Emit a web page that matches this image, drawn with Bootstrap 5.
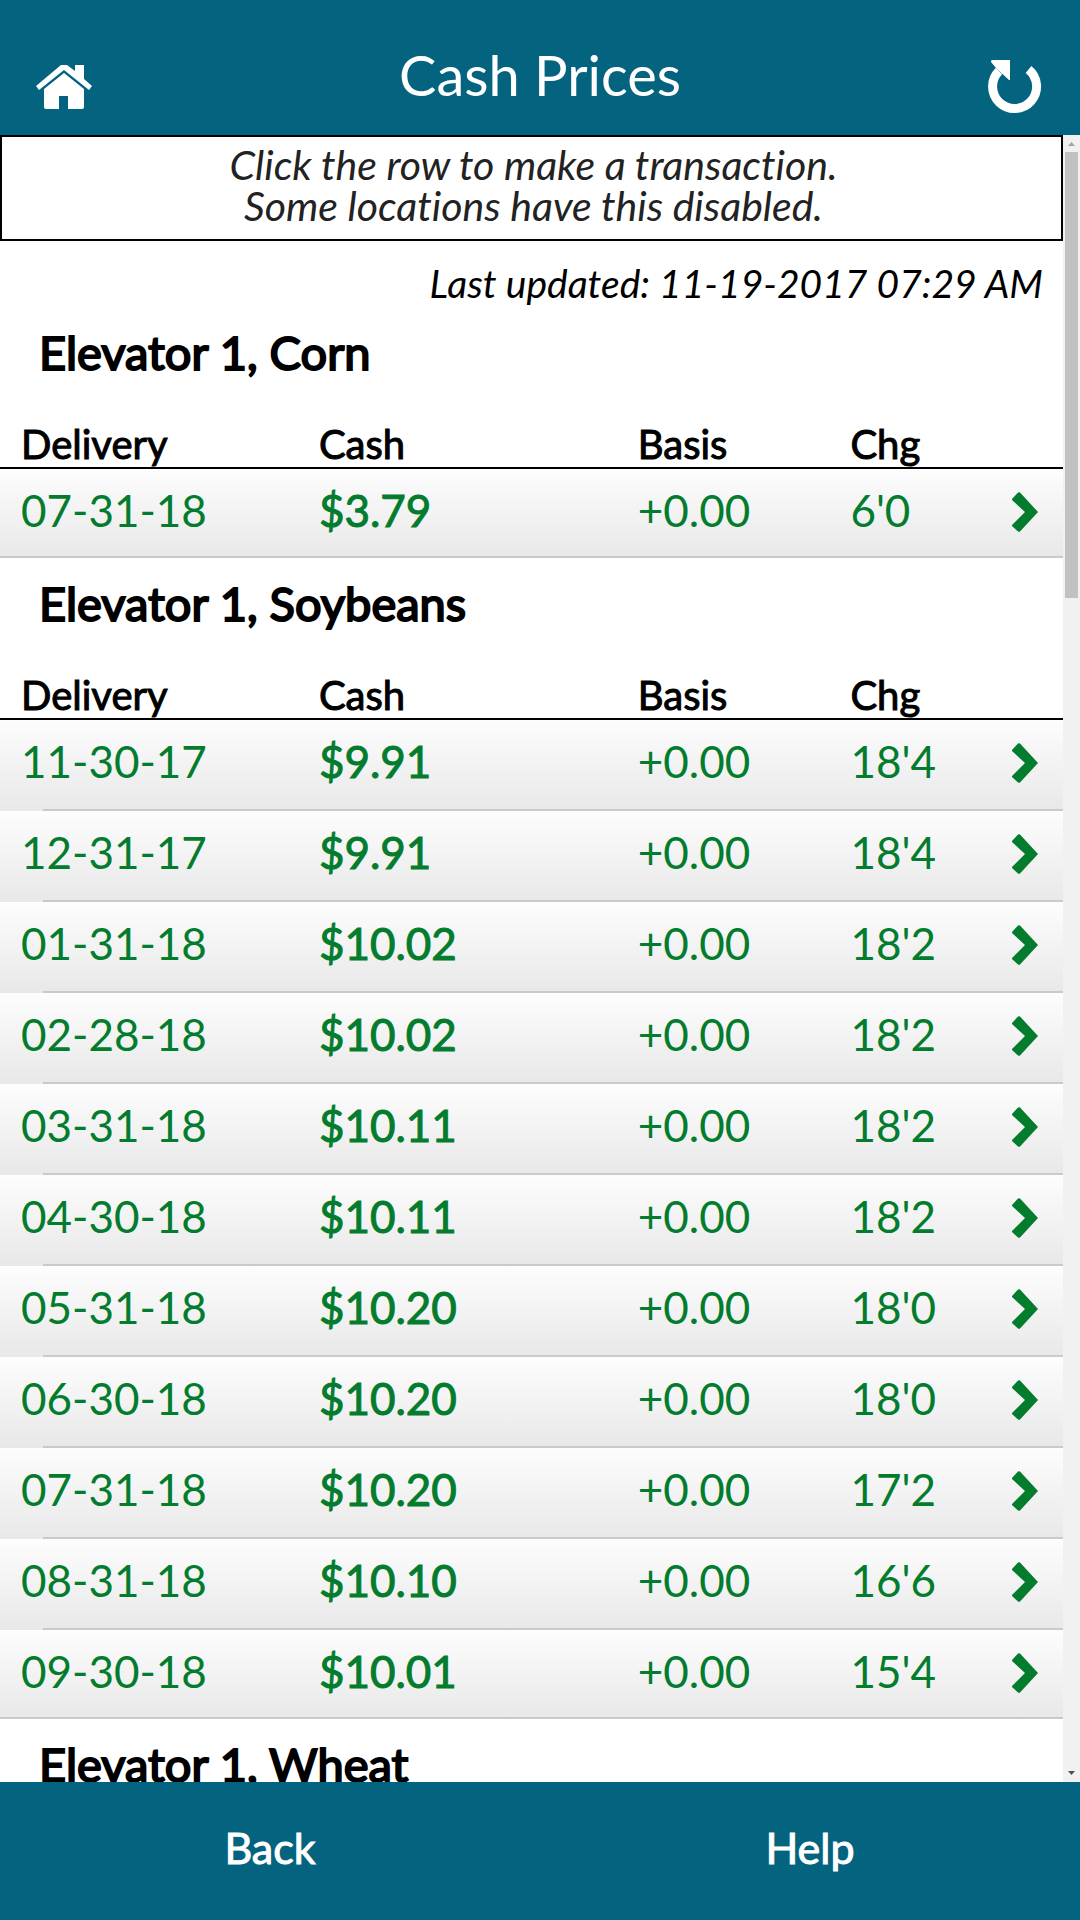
<!DOCTYPE html>
<html lang="en">
<head>
<meta charset="utf-8">
<meta name="viewport" content="width=device-width, initial-scale=1">
<title>Cash Prices</title>
<link rel="stylesheet" href="https://cdn.jsdelivr.net/npm/bootstrap@5.3.0/dist/css/bootstrap.min.css">
<style>
  body { font-family: Lato, "Liberation Sans", sans-serif; font-variant-ligatures: none; color: #000; background: #fff; }
  .bar { background: #04637f; color: #fff; }
  .top-bar { height: 135px; padding: 17px 36px 0; }
  .top-bar h1 { font-size: 56px; line-height: 68px; }
  .icon-btn { line-height: 0; color: #fff; }
  .bottom-bar { height: 138px; }
  .bottom-bar .btn { font-size: 43px; line-height: 52px; padding: 0 0 6px; color: #fff; }
  .faux-bold { font-weight: 400; -webkit-text-stroke: 1px currentColor; }
  .group-title { -webkit-text-stroke-width: 2px; }
  .notice { border: 2px solid #000; padding: 7px 12px 13px 16px; font-size: 41px; line-height: 41px; color: #222; }
  .updated { font-size: 39px; line-height: 48px; padding: 18px 20px 0; }
  .group-title { font-size: 47px; line-height: 58px; padding: 16px 39px 43px; }
  .prices { width: 100%; table-layout: fixed; border-collapse: separate; border-spacing: 0; }
  .prices th { font-size: 40px; line-height: 41px; padding: 0 0 2px; border-bottom: 2px solid #000; }
  .prices td { font-size: 44px; line-height: 52px; padding: 15px 0 0; height: 91px; vertical-align: top; color: #047c2e; }
  .prices th:first-child, .prices td:first-child { padding-left: 21px; }
  .prices tbody tr {
    background: linear-gradient(#cacaca, #cacaca) 43px 100% / 100% 2px no-repeat, linear-gradient(#fdfdfd, #e8e8e8);
  }
  .prices tbody tr:last-child { background-position: 0 100%, 0 0; }
  .prices tbody tr:last-child td { height: 89px; }
  .go { display: block; line-height: 0; padding: 8px 25px 0 0; color: #047c2e; text-align: right; }
  .w-chg { width: 20%; } .w-wide { width: 30%; } .w-go { width: 10%; }
  .track { width: 17px; background: #f1f1f1; }
  .thumb { width: 13px; height: 446px; background: #c1c1c1; }
</style>
</head>
<body>
<div class="d-flex flex-column vh-100 overflow-hidden">
  <header class="bar top-bar d-flex justify-content-between align-items-start flex-shrink-0">
    <button class="btn p-0 border-0 icon-btn mt-4 pt-4" aria-label="Home">
      <svg width="56" height="44" viewBox="0 1 56 44" fill="currentColor"><path d="M0 22 25 1Q28-1 31 1L39 7V1H48V15L56 22 53 26 28 6 3 26Z"/><path d="M28 9 48 25V43Q48 45 46 45H32V32H23V45H10Q8 45 8 43V25Z"/></svg>
    </button>
    <h1 class="m-0 fw-normal pt-4">Cash Prices</h1>
    <button class="btn p-0 border-0 icon-btn mt-4 pt-3" aria-label="Refresh">
      <svg width="56" height="58" viewBox="0 -3 56 58"><path d="M11 11A22 22 0 1 0 40.500 9.500" fill="none" stroke="currentColor" stroke-width="9"/><path d="M4 0H22V20H21L8 8 3 2Q3 0 4 0Z" fill="currentColor"/></svg>
    </button>
  </header>

  <div class="d-flex flex-grow-1 overflow-hidden">
    <main class="flex-grow-1 overflow-hidden">
      <p class="notice fst-italic text-center m-0">Click the row to make a transaction.<br>Some locations have this disabled.</p>
      <p class="updated fst-italic text-end m-0">Last updated: 11-19-2017 07:29 AM</p>

      <h2 class="group-title fw-normal m-0">Elevator 1, Corn</h2>
      <table class="prices">
        <thead><tr><th class="w-wide faux-bold">Delivery</th><th class="w-wide faux-bold">Cash</th><th class="w-chg faux-bold">Basis</th><th class="w-go faux-bold">Chg</th><th class="w-go"></th></tr></thead>
        <tbody data-rows="07-31-18 3.79 6'0"></tbody>
      </table>

      <h2 class="group-title fw-normal m-0">Elevator 1, Soybeans</h2>
      <table class="prices">
        <thead><tr><th class="w-wide faux-bold">Delivery</th><th class="w-wide faux-bold">Cash</th><th class="w-chg faux-bold">Basis</th><th class="w-go faux-bold">Chg</th><th class="w-go"></th></tr></thead>
        <tbody data-rows="11-30-17 9.91 18'4|12-31-17 9.91 18'4|01-31-18 10.02 18'2|02-28-18 10.02 18'2|03-31-18 10.11 18'2|04-30-18 10.11 18'2|05-31-18 10.20 18'0|06-30-18 10.20 18'0|07-31-18 10.20 17'2|08-31-18 10.10 16'6|09-30-18 10.01 15'4"></tbody>
      </table>

      <h2 class="group-title fw-normal m-0">Elevator 1, Wheat</h2>
    </main>
    <div class="track d-flex flex-column align-items-center flex-shrink-0" aria-hidden="true">
      <svg width="17" height="17" viewBox="0 0 17 17"><path d="M5 11H12L8.500 7Z" fill="#a3a3a3"/></svg>
      <div class="thumb"></div>
      <svg class="mt-auto" width="17" height="17" viewBox="0 0 17 17"><path d="M5 6H12L8.500 10Z" fill="#505050"/></svg>
    </div>
  </div>

  <footer class="bar bottom-bar d-flex flex-shrink-0">
    <button class="btn rounded-0 border-0 flex-fill w-50 faux-bold">Back</button>
    <button class="btn rounded-0 border-0 flex-fill w-50 faux-bold">Help</button>
  </footer>
</div>
<script>
  document.querySelectorAll('tbody[data-rows]').forEach(function (body) {
    body.innerHTML = body.dataset.rows.split('|').map(function (line) {
      var f = line.split(' ');
      return '<tr><td>' + f[0] + '</td><td class="faux-bold">$' + f[1] + '</td><td>+0.00</td><td>' + f[2] + '</td>' +
        '<td><a class="go" href="#" aria-label="Open ' + f[0] + '"><svg width="26" height="40" viewBox="0 0 26 40">' +
        '<path d="M0 7 6 0.500Q7 0 8 0.500L26 20 8 39.500Q7 40 6 39.500L0 34Q0 33 0 33L13 20 0 8Z" fill="currentColor"/></svg></a></td></tr>';
    }).join('');
  });
</script>
<script src="https://cdn.jsdelivr.net/npm/bootstrap@5.3.0/dist/js/bootstrap.bundle.min.js"></script>
</body>
</html>
